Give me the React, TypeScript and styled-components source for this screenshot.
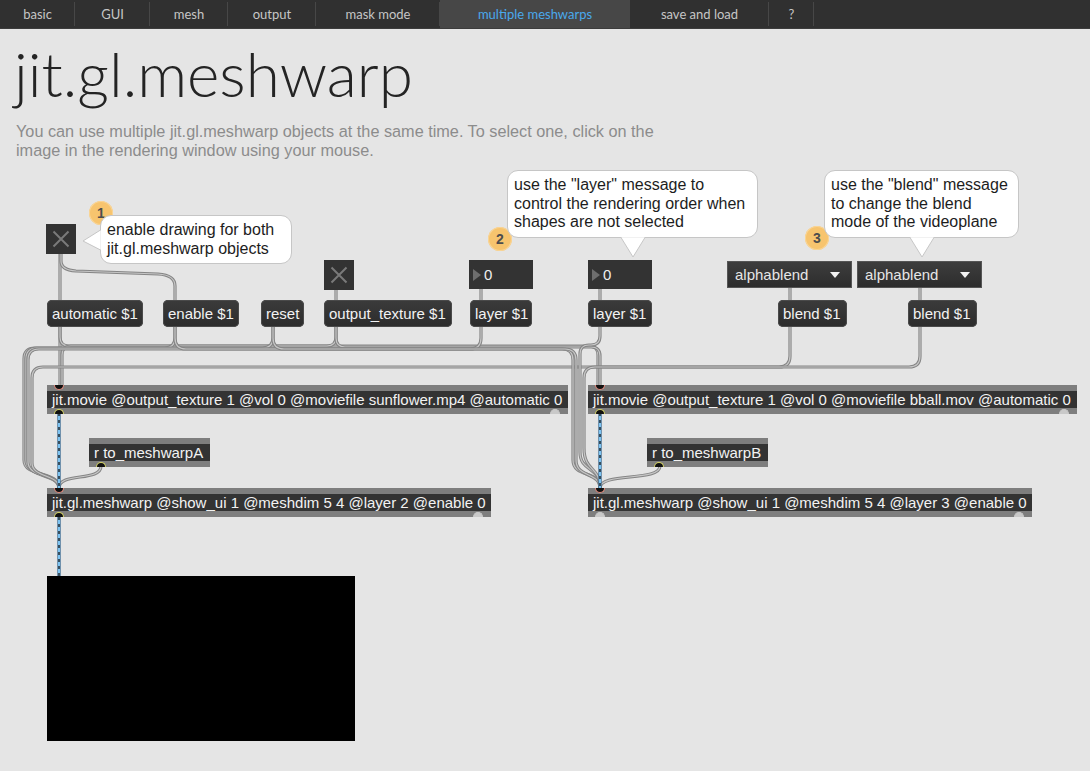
import React from 'react';
import styled, { createGlobalStyle, css } from 'styled-components';

const Global = createGlobalStyle`
  html, body { margin: 0; padding: 0; background: #e5e5e5; }
  body { width: 1090px; height: 771px; overflow: hidden; font-family: "Liberation Sans", Arial, sans-serif; }
`;

const Page = styled.div`
  width: 1090px;
  height: 771px;
  display: flex;
  flex-direction: column;
  background: #e5e5e5;
`;

const TabBar = styled.nav`
  display: flex;
  flex: none;
  height: 28px;
  background: #303030;
  border-bottom: 1px solid #3c3c3c;
`;

const Tab = styled.div<{ $w: number; $active?: boolean }>`
  position: relative;
  flex: none;
  width: ${(p) => p.$w}px;
  display: flex;
  align-items: center;
  justify-content: center;
  font-family: Lato, "Open Sans", sans-serif;
  font-size: 13px;
  color: ${(p) => (p.$active ? '#4aa9ec' : '#c6c6c6')};
  background: ${(p) => (p.$active ? '#474747' : 'transparent')};
  &::after {
    content: '';
    position: absolute;
    right: 0;
    top: 2px;
    bottom: 2px;
    width: 1px;
    background: ${(p) => (p.$active ? 'transparent' : '#474747')};
  }
`;

const Header = styled.header`
  flex: none;
  height: 131px;
  box-sizing: border-box;
  padding-left: 14px;
`;

const Title = styled.h1`
  margin: 13px 0 0;
  font-family: Lato, "Open Sans", sans-serif;
  font-weight: 300;
  font-size: 62px;
  line-height: 62px;
  color: #242424;
`;

const Intro = styled.p`
  margin: 18px 0 0 2px;
  font-family: "Liberation Sans Narrow", "Arial Narrow", "Liberation Sans", sans-serif;
  font-size: 16.25px;
  line-height: 19px;
  color: #8c8c8c;
  white-space: nowrap;
`;

const Canvas = styled.main`
  position: relative;
  flex: 1;
`;

const CordLayer = styled.svg`
  position: absolute;
  left: 0;
  top: 0;
  overflow: visible;
`;

const placed = css<{ $x: number; $y: number; $w: number; $h: number }>`
  position: absolute;
  left: ${(p) => p.$x}px;
  top: ${(p) => p.$y}px;
  width: ${(p) => p.$w}px;
  height: ${(p) => p.$h}px;
  box-sizing: border-box;
`;

type Box = { $x: number; $y: number; $w: number; $h: number };

const ToggleBox = styled.div<Box>`
  ${placed};
  background: #333333;
  display: flex;
  align-items: center;
  justify-content: center;
`;

const NumberBox = styled.div<Box>`
  ${placed};
  background: #333333;
  display: flex;
  align-items: center;
  gap: 3px;
  padding-left: 4px;
  color: #f0f0f0;
  font-size: 15px;
`;

const NumArrow = styled.span`
  width: 0;
  height: 0;
  border-top: 6.5px solid transparent;
  border-bottom: 6.5px solid transparent;
  border-left: 8px solid #6e6e6e;
`;

const Menu = styled.div<Box>`
  ${placed};
  background: linear-gradient(#3d3d3d, #2d2d2d);
  border: 1px solid #555;
  display: flex;
  align-items: center;
  justify-content: space-between;
  padding: 0 11px 0 7px;
  color: #e6e6e6;
  font-size: 15px;
`;

const MenuArrow = styled.span`
  width: 0;
  height: 0;
  border-left: 5px solid transparent;
  border-right: 5px solid transparent;
  border-top: 6px solid #f2f2f2;
`;

const Message = styled.div<Box>`
  ${placed};
  border-radius: 5px;
  background: linear-gradient(#3b3b3b, #2c2c2c);
  box-shadow: 0 0 0 1px #4a4a4a inset;
  display: flex;
  align-items: center;
  padding-left: 5px;
  color: #f2f2f2;
  font-size: 15px;
  white-space: nowrap;
`;

const ObjectBox = styled.div<Box>`
  ${placed};
  background: #7e7e7e;
  padding: 6px 0;
`;

const ObjectText = styled.div`
  height: 100%;
  background: #333333;
  color: #f2f2f2;
  font-size: 15px;
  line-height: 17px;
  padding-left: 5px;
  white-space: nowrap;
  overflow: hidden;
`;

const Port = styled.span<{ $side: 'top' | 'bottom'; $x: number; $kind: 'in' | 'out' | 'idle' }>`
  position: absolute;
  ${(p) => p.$side}: 0;
  left: ${(p) => p.$x - 5}px;
  width: 10px;
  height: 5px;
  box-sizing: border-box;
  background: ${(p) => (p.$kind === 'idle' ? '#c9c9c9' : '#111')};
  border: 1.5px solid ${(p) => (p.$kind === 'in' ? '#e98a7c' : p.$kind === 'out' ? '#d6d466' : '#c9c9c9')};
  ${(p) => (p.$side === 'top' ? 'border-top: none;' : 'border-bottom: none;')}
  border-radius: ${(p) => (p.$side === 'top' ? '0 0 6px 6px' : '6px 6px 0 0')};
`;

const Screen = styled.div<Box>`
  ${placed};
  background: #000;
`;

const Badge = styled.div<{ $x: number; $y: number }>`
  position: absolute;
  left: ${(p) => p.$x - 12}px;
  top: ${(p) => p.$y - 12}px;
  width: 24px;
  height: 24px;
  border-radius: 50%;
  background: #f7c46e;
  box-shadow: 0 0 0 1px #f9d597 inset;
  display: flex;
  align-items: center;
  justify-content: center;
  font-weight: 700;
  font-size: 14px;
  color: #4d4d4d;
`;

const Bubble = styled.div<Box>`
  ${placed};
  background: #fff;
  border: 1px solid #c6c6c6;
  border-radius: 11px;
  padding: 5px 6px;
  font-size: 16px;
  line-height: 18.5px;
  color: #1d1d1d;
  white-space: nowrap;
`;

const Pointer = styled.svg`
  position: absolute;
  overflow: visible;
`;

function rp(points: [number, number][], r = 8): string {
  let d = `M${points[0][0]} ${points[0][1]}`;
  for (let i = 1; i < points.length - 1; i++) {
    const [px, py] = points[i - 1];
    const [cx, cy] = points[i];
    const [nx, ny] = points[i + 1];
    const l1 = Math.hypot(cx - px, cy - py);
    const l2 = Math.hypot(nx - cx, ny - cy);
    const rr = Math.min(r, l1 / 2, l2 / 2);
    const ax = cx - ((cx - px) / l1) * rr;
    const ay = cy - ((cy - py) / l1) * rr;
    const bx = cx + ((nx - cx) / l2) * rr;
    const by = cy + ((ny - cy) / l2) * rr;
    d += ` L${ax} ${ay} Q${cx} ${cy} ${bx} ${by}`;
  }
  const last = points[points.length - 1];
  d += ` L${last[0]} ${last[1]}`;
  return d;
}

const grayCords: string[] = [
  // toggle 1
  'M60 94 L60 140',
  'M61 94 L61 101 Q61 110 76 111 L158 114 Q175 115 175 126 L175 140',
  // small vertical feeds
  'M336 130 L336 140',
  'M481 129 L481 140',
  'M600 129 L600 140',
  'M790 128 L790 140',
  'M920 128 L920 140',
  // automatic / output_texture -> movies
  'M60 167 L60 225',
  rp([[60, 167], [60, 186], [598, 186], [598, 225]], 9),
  rp([[336, 167], [336, 186], [62, 186], [62, 225]], 9),
  rp([[336, 167], [336, 187], [600, 187], [600, 225]], 9),
  // to meshwarp A (left route)
  rp([[175, 167], [175, 188], [24, 188], [24, 300]], 11) + ' C24 318 59 310 59 328',
  rp([[273, 167], [273, 188], [26, 188], [26, 300]], 11) + ' C26 318 59 312 59 328',
  rp([[481, 167], [481, 189], [28, 189], [28, 302]], 11) + ' C28 318 59 314 59 328',
  rp([[790, 167], [790, 207], [32, 207], [32, 303]], 11) + ' C32 318 59 314 59 328',
  // to meshwarp B (right route)
  rp([[175, 167], [175, 189], [573, 189], [573, 300]], 11) + ' C573 318 600 310 600 328',
  rp([[273, 167], [273, 189], [576, 189], [576, 300]], 11) + ' C576 318 600 312 600 328',
  rp([[600, 167], [600, 185], [580, 185], [580, 292]], 9) + ' C580 312 600 306 600 328',
  rp([[920, 167], [920, 207], [584, 207], [584, 288]], 11) + ' C584 312 600 306 600 328',
  // receive objects
  'M101 306 C101 322 59 312 59 328',
  'M660 306 C660 322 600 312 600 328',
];

const jitCords: string[] = ['M59 253 L59 328', 'M59 357 L59 416', 'M600 253 L600 328'];

const tabs: { label: string; w: number; active?: boolean }[] = [
  { label: 'basic', w: 75 },
  { label: 'GUI', w: 75 },
  { label: 'mesh', w: 78 },
  { label: 'output', w: 88 },
  { label: 'mask mode', w: 124 },
  { label: 'multiple meshwarps', w: 190, active: true },
  { label: 'save and load', w: 139 },
  { label: '?', w: 45 },
];

const Toggle = ({ x, y }: { x: number; y: number }) => (
  <ToggleBox $x={x} $y={y} $w={30} $h={30}>
    <svg width="30" height="30" viewBox="0 0 30 30">
      <path d="M7.5 7.5 L22.5 22.5 M22.5 7.5 L7.5 22.5" stroke="#7a7a7a" strokeWidth="2" />
    </svg>
  </ToggleBox>
);

type ObjProps = {
  x: number;
  y: number;
  w: number;
  h?: number;
  text: string;
  inlet?: boolean;
  outlet?: 'out' | 'idle';
  dump?: boolean;
};

const Obj = ({ x, y, w, h = 29, text, inlet, outlet, dump }: ObjProps) => (
  <ObjectBox $x={x} $y={y} $w={w} $h={h}>
    <ObjectText>{text}</ObjectText>
    {inlet && <Port $side="top" $x={12} $kind="in" />}
    {outlet && <Port $side="bottom" $x={12} $kind={outlet} />}
    {dump && <Port $side="bottom" $x={w - 13} $kind="idle" />}
  </ObjectBox>
);

export default function App() {
  return (
    <Page>
      <Global />
      <TabBar>
        {tabs.map((t) => (
          <Tab key={t.label} $w={t.w} $active={t.active}>
            {t.label}
          </Tab>
        ))}
      </TabBar>
      <Header>
        <Title>jit.gl.meshwarp</Title>
        <Intro>
          You can use multiple jit.gl.meshwarp objects at the same time. To select one, click on the
          <br />
          image in the rendering window using your mouse.
        </Intro>
      </Header>
      <Canvas>
        <CordLayer width="1090" height="611" viewBox="0 0 1090 611">
          {grayCords.map((d, i) => (
            <g key={i} fill="none">
              <path d={d} stroke="#858585" strokeWidth="3.2" />
              <path d={d} stroke="#c6c6c6" strokeWidth="1.2" />
            </g>
          ))}
          {jitCords.map((d, i) => (
            <g key={'j' + i} fill="none">
              <path d={d} stroke="#3f6f96" strokeWidth="3.4" />
              <path d={d} stroke="#7cc3f2" strokeWidth="2" />
              <path d={d} stroke="#111" strokeWidth="1.3" strokeDasharray="3 4" />
            </g>
          ))}
        </CordLayer>

        <Toggle x={46} y={64} />
        <Badge $x={101} $y={53}>1</Badge>
        <Bubble $x={100} $y={55} $w={192} $h={49}>
          enable drawing for both
          <br />
          jit.gl.meshwarp objects
          <Pointer width="1" height="1" style={{ left: -1, top: 14 }}>
            <path d="M0.5 0 L-17 11 L0.5 20" fill="#fff" stroke="#c6c6c6" strokeWidth="1" />
            <path d="M1.5 1 L1.5 19" stroke="#fff" strokeWidth="2" />
          </Pointer>
        </Bubble>

        <Badge $x={500} $y={79}>2</Badge>
        <Bubble $x={507} $y={10} $w={251} $h={68}>
          use the "layer" message to
          <br />
          control the rendering order when
          <br />
          shapes are not selected
          <Pointer width="1" height="1" style={{ left: 113, top: 66 }}>
            <path d="M0 0.5 L12 20 L24 0.5" fill="#fff" stroke="#c6c6c6" strokeWidth="1" />
            <path d="M1 -0.5 L23 -0.5" stroke="#fff" strokeWidth="2" />
          </Pointer>
        </Bubble>

        <Badge $x={817} $y={78}>3</Badge>
        <Bubble $x={824} $y={10} $w={195} $h={68}>
          use the "blend" message
          <br />
          to change the blend
          <br />
          mode of the videoplane
          <Pointer width="1" height="1" style={{ left: 85, top: 66 }}>
            <path d="M0 0.5 L12 20 L24 0.5" fill="#fff" stroke="#c6c6c6" strokeWidth="1" />
            <path d="M1 -0.5 L23 -0.5" stroke="#fff" strokeWidth="2" />
          </Pointer>
        </Bubble>

        <Toggle x={324} y={100} />
        <NumberBox $x={469} $y={100} $w={64} $h={29}>
          <NumArrow />0
        </NumberBox>
        <NumberBox $x={588} $y={100} $w={64} $h={29}>
          <NumArrow />0
        </NumberBox>
        <Menu $x={727} $y={101} $w={125} $h={27}>
          alphablend
          <MenuArrow />
        </Menu>
        <Menu $x={857} $y={101} $w={125} $h={27}>
          alphablend
          <MenuArrow />
        </Menu>

        <Message $x={47} $y={140} $w={96} $h={27}>automatic $1</Message>
        <Message $x={163} $y={140} $w={76} $h={27}>enable $1</Message>
        <Message $x={261} $y={140} $w={43} $h={27}>reset</Message>
        <Message $x={324} $y={140} $w={128} $h={27}>output_texture $1</Message>
        <Message $x={470} $y={140} $w={62} $h={27}>layer $1</Message>
        <Message $x={588} $y={140} $w={64} $h={27}>layer $1</Message>
        <Message $x={778} $y={140} $w={69} $h={27}>blend $1</Message>
        <Message $x={908} $y={140} $w={69} $h={27}>blend $1</Message>

        <Obj x={47} y={225} w={521} h={29} text="jit.movie @output_texture 1 @vol 0 @moviefile sunflower.mp4 @automatic 0" inlet outlet="out" dump />
        <Obj x={588} y={225} w={489} h={29} text="jit.movie @output_texture 1 @vol 0 @moviefile bball.mov @automatic 0" inlet outlet="out" dump />
        <Obj x={89} y={278} w={121} h={29} text="r to_meshwarpA" outlet="out" />
        <Obj x={647} y={278} w={121} h={29} text="r to_meshwarpB" outlet="out" />
        <Obj x={47} y={328} w={444} h={29} text="jit.gl.meshwarp @show_ui 1 @meshdim 5 4 @layer 2 @enable 0" inlet outlet="out" dump />
        <Obj x={588} y={328} w={444} h={29} text="jit.gl.meshwarp @show_ui 1 @meshdim 5 4 @layer 3 @enable 0" inlet outlet="idle" dump />

        <Screen $x={47} $y={416} $w={308} $h={165} />
      </Canvas>
    </Page>
  );
}
